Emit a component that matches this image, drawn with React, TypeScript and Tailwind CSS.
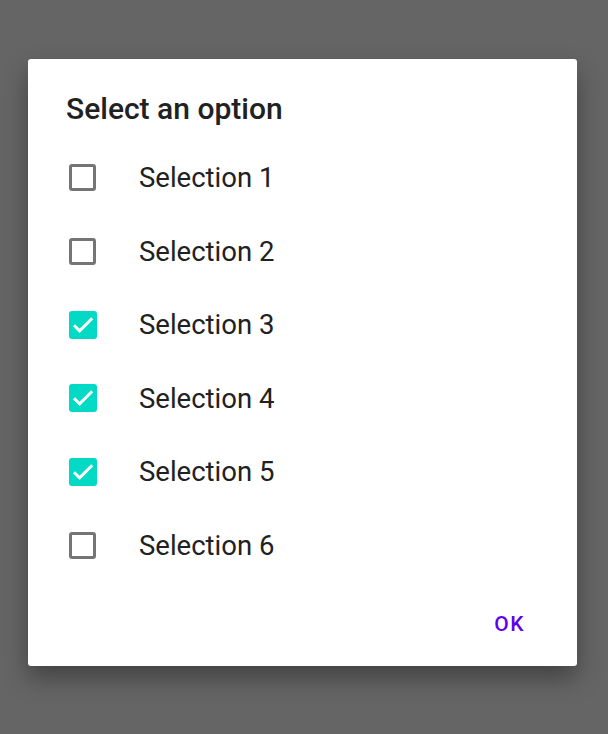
import React, { useState } from 'react';

const options = ['Selection 1', 'Selection 2', 'Selection 3', 'Selection 4', 'Selection 5', 'Selection 6'];

const CheckBox = ({ checked }: { checked: boolean }) =>
  checked ? (
    <div className="w-[28px] h-[28px] rounded-[3px] bg-[#03dac5]">
      <svg width="28" height="28" viewBox="0 0 28 28" fill="none">
        <path d="M5 14.2l5.6 5.6L23.2 7.2" stroke="#fff" strokeWidth="3" />
      </svg>
    </div>
  ) : (
    <div className="w-[27px] h-[27px] rounded-[3px] border-[3px] border-[#757575] bg-white" />
  );

export default function App() {
  const [selected, setSelected] = useState<boolean[]>([false, false, true, true, true, false]);

  const toggle = (i: number) => setSelected((s) => s.map((v, j) => (j === i ? !v : v)));

  return (
    <div
      className="w-[608px] h-[734px] bg-[#656565] pt-[59px] pl-[28px]"
      style={{ fontFamily: 'Roboto, "Liberation Sans", sans-serif' }}
    >
      <div className="w-[549px] h-[607px] bg-white rounded-[3px] shadow-[0_12px_24px_rgba(0,0,0,0.35)] flex flex-col">
        {/* Title */}
        <div className="pt-[32px] pl-[38px] text-[30px] leading-[36px] font-medium text-[#212121]">
          Select an option
        </div>

        {/* Options */}
        <div className="mt-[14px] flex flex-col">
          {options.map((label, i) => (
            <div
              key={label}
              className="h-[73.5px] flex items-center pl-[41px] cursor-pointer"
              onClick={() => toggle(i)}
            >
              <CheckBox checked={selected[i]} />
              <span className={`${selected[i] ? 'ml-[42px]' : 'ml-[43px]'} text-[27.5px] text-[#212121]`}>{label}</span>
            </div>
          ))}
        </div>

        {/* Actions */}
        <div className="flex justify-end pr-[52px] mt-[30px]">
          <button className="text-[21px] font-medium tracking-[1.5px] text-[#6200ee] leading-[24px]">OK</button>
        </div>
      </div>
    </div>
  );
}
